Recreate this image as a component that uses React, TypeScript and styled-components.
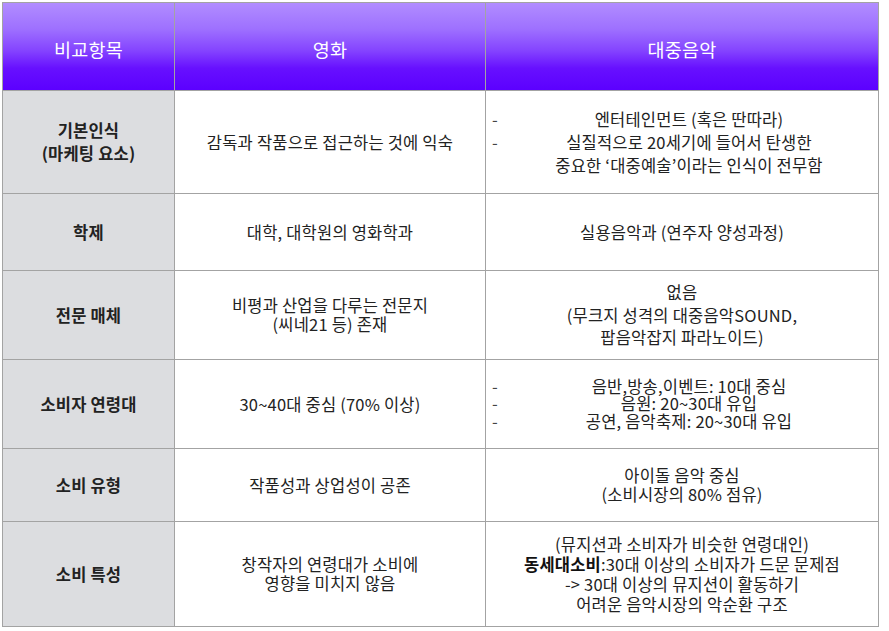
import React from "react";
import styled, { createGlobalStyle } from "styled-components";

const Global = createGlobalStyle`
  html, body { margin: 0; padding: 0; background: #ffffff; }
  body {
    padding: 2px;
    font-family: "Noto Sans CJK KR", "Noto Sans", sans-serif;
    color: #222222;
  }
`;

const Grid = styled.div`
  display: grid;
  grid-template-columns: 172px 311px 393px;
  grid-template-rows: 88px 103px 77px 89px 89px 73px 105px;
  width: 877px;
  box-sizing: border-box;
  border-top: 1px solid #a3a3a3;
  border-left: 1px solid #a3a3a3;
`;

const BaseCell = styled.div`
  box-sizing: border-box;
  border-right: 1px solid #a3a3a3;
  border-bottom: 1px solid #a3a3a3;
  display: flex;
  flex-direction: column;
  align-items: center;
  justify-content: center;
  text-align: center;
  font-size: 16.5px;
  letter-spacing: 0.2px;
  white-space: nowrap;
`;

const HeadCell = styled(BaseCell)`
  background: linear-gradient(
    to bottom,
    #b18dff 0%,
    #9e70ff 30%,
    #8443ff 55%,
    #6710ff 75%,
    #5c00ff 100%
  );
  color: #ffffff;
  font-size: 18.5px;
  padding-top: 4px;
`;

const LabelCell = styled(BaseCell)<{ $lh?: number }>`
  background: #dcdde0;
  font-weight: 700;
  line-height: ${(p) => p.$lh ?? 23}px;
`;

const Cell = styled(BaseCell)<{ $lh?: number }>`
  background: #ffffff;
  line-height: ${(p) => p.$lh ?? 19}px;
  padding: 0 6px;
`;

const DashList = styled.ul<{ $lh: number }>`
  list-style: none;
  margin: 0;
  padding: 0;
  width: 100%;
  line-height: ${(p) => p.$lh}px;
`;

const DashItem = styled.li`
  display: grid;
  grid-template-columns: 14px 1fr;
  text-align: center;
`;

const Dash = styled.span`
  text-align: left;
  color: #444;
`;

const Strong = styled.b`
  font-weight: 700;
  color: #111;
`;

const Line = styled.div``;

export default function App() {
  return (
    <>
      <Global />
      <Grid>
        <HeadCell>비교항목</HeadCell>
        <HeadCell>영화</HeadCell>
        <HeadCell>대중음악</HeadCell>

        <LabelCell>
          <Line>기본인식</Line>
          <Line>(마케팅 요소)</Line>
        </LabelCell>
        <Cell>감독과 작품으로 접근하는 것에 익숙</Cell>
        <Cell>
          <DashList $lh={23}>
            <DashItem>
              <Dash>-</Dash>
              <span>엔터테인먼트 (혹은 딴따라)</span>
            </DashItem>
            <DashItem>
              <Dash>-</Dash>
              <span>
                실질적으로 20세기에 들어서 탄생한
                <br />
                중요한 ‘대중예술’이라는 인식이 전무함
              </span>
            </DashItem>
          </DashList>
        </Cell>

        <LabelCell>학제</LabelCell>
        <Cell>대학, 대학원의 영화학과</Cell>
        <Cell>실용음악과 (연주자 양성과정)</Cell>

        <LabelCell>전문 매체</LabelCell>
        <Cell>
          <Line>비평과 산업을 다루는 전문지</Line>
          <Line>(씨네21 등) 존재</Line>
        </Cell>
        <Cell $lh={22.5}>
          <Line>없음</Line>
          <Line>(무크지 성격의 대중음악SOUND,</Line>
          <Line>팝음악잡지 파라노이드)</Line>
        </Cell>

        <LabelCell>소비자 연령대</LabelCell>
        <Cell>30~40대 중심 (70% 이상)</Cell>
        <Cell>
          <DashList $lh={17.5}>
            <DashItem>
              <Dash>-</Dash>
              <span>음반,방송,이벤트: 10대 중심</span>
            </DashItem>
            <DashItem>
              <Dash>-</Dash>
              <span>음원: 20~30대 유입</span>
            </DashItem>
            <DashItem>
              <Dash>-</Dash>
              <span>공연, 음악축제: 20~30대 유입</span>
            </DashItem>
          </DashList>
        </Cell>

        <LabelCell>소비 유형</LabelCell>
        <Cell>작품성과 상업성이 공존</Cell>
        <Cell>
          <Line>아이돌 음악 중심</Line>
          <Line>(소비시장의 80% 점유)</Line>
        </Cell>

        <LabelCell>소비 특성</LabelCell>
        <Cell>
          <Line>창작자의 연령대가 소비에</Line>
          <Line>영향을 미치지 않음</Line>
        </Cell>
        <Cell $lh={20}>
          <Line>(뮤지션과 소비자가 비슷한 연령대인)</Line>
          <Line>
            <Strong>동세대소비</Strong>:30대 이상의 소비자가 드문 문제점
          </Line>
          <Line>-&gt; 30대 이상의 뮤지션이 활동하기</Line>
          <Line>어려운 음악시장의 악순환 구조</Line>
        </Cell>
      </Grid>
    </>
  );
}
